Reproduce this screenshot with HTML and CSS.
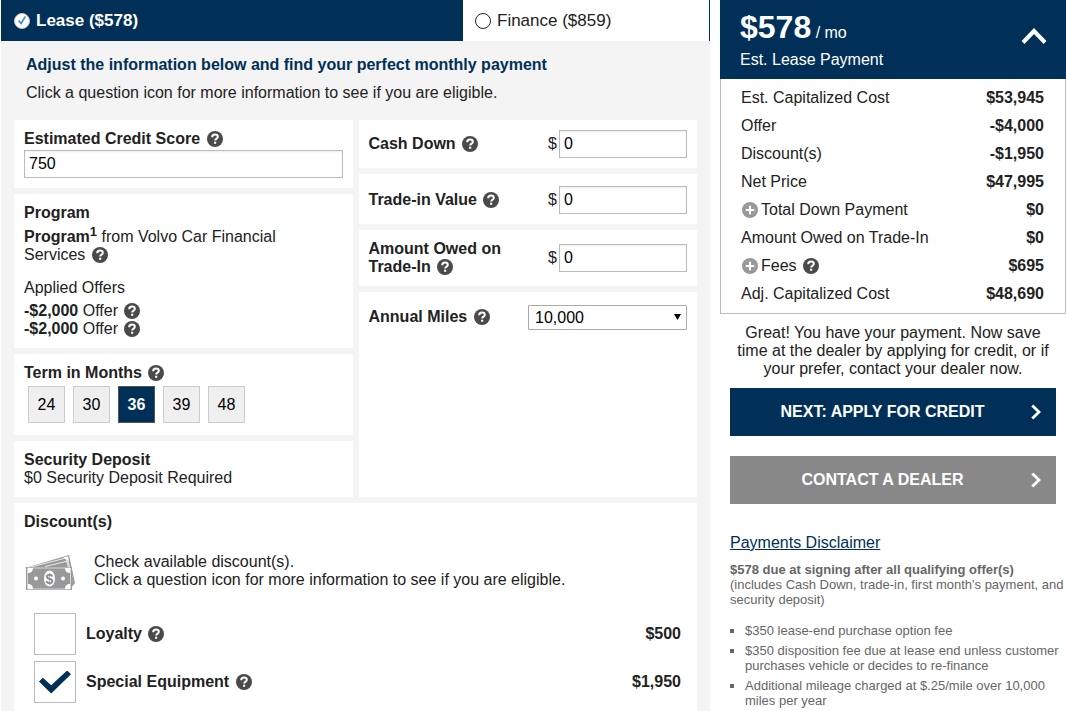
FILE: index.html
```
<!DOCTYPE html>
<html lang="en">
<head>
  <meta charset="UTF-8" />
  <title>Payment Calculator</title>
  <link rel="stylesheet" href="styles.css">
</head>
<body>
  <!-- shared icons -->
  <svg class="defs" aria-hidden="true">
    <symbol id="icon-help" viewBox="0 0 16 16">
      <circle cx="8" cy="8" r="8" fill="#4a4a4a"/>
      <path d="M5.2 6.2C5.2 4.4 6.4 3.6 8 3.6s2.8.9 2.8 2.3c0 1.7-2.6 1.8-2.6 3.6" fill="none" stroke="#fff" stroke-width="2"/>
      <rect x="7.1" y="10.7" width="2.1" height="2.1" fill="#fff"/>
    </symbol>
    <symbol id="icon-plus" viewBox="0 0 16 16">
      <circle cx="8" cy="8" r="8" fill="#999"/>
      <path d="M8 3.8v8.4M3.8 8h8.4" stroke="#fff" stroke-width="2"/>
    </symbol>
    <symbol id="icon-arrow" viewBox="0 0 10 16">
      <path d="M1.3 1.5L8 8l-6.7 6.5" fill="none" stroke="#fff" stroke-width="2.8"/>
    </symbol>
  </svg>

  <div class="page">
    <main class="calculator">
      <div class="tabs">
        <label class="tab active"><input type="radio" name="type" checked> Lease ($578)</label>
        <label class="tab"><input type="radio" name="type"> Finance ($859)</label>
      </div>

      <div class="intro">
        <h2>Adjust the information below and find your perfect monthly payment</h2>
        <p>Click a question icon for more information to see if you are eligible.</p>
      </div>

      <div class="cards">
        <div class="column">
          <section class="card">
            <label class="title" for="score">Estimated Credit Score</label>
            <button class="help" aria-label="Help"><svg><use href="#icon-help"/></svg></button>
            <input class="field score" id="score" type="text" value="750">
          </section>

          <section class="card">
            <h3>Program</h3>
            <p class="lender"><b>Program<sup>1</sup></b> from Volvo Car Financial Services <button class="help" aria-label="Help"><svg><use href="#icon-help"/></svg></button></p>
            <p>Applied Offers</p>
            <ul class="offers">
              <li><b>-$2,000</b> Offer <button class="help" aria-label="Help"><svg><use href="#icon-help"/></svg></button></li>
              <li><b>-$2,000</b> Offer <button class="help" aria-label="Help"><svg><use href="#icon-help"/></svg></button></li>
            </ul>
          </section>

          <section class="card term">
            <h3>Term in Months <button class="help" aria-label="Help"><svg><use href="#icon-help"/></svg></button></h3>
            <div class="months">
              <button>24</button>
              <button>30</button>
              <button class="selected">36</button>
              <button>39</button>
              <button>48</button>
            </div>
          </section>

          <section class="card">
            <h3>Security Deposit</h3>
            <p>$0 Security Deposit Required</p>
          </section>
        </div>

        <div class="column">
          <section class="card amount">
            <div class="name"><label for="cash">Cash Down</label> <button class="help" aria-label="Help"><svg><use href="#icon-help"/></svg></button></div>
            <span>$</span>
            <input class="field" id="cash" type="text" value="0">
          </section>

          <section class="card amount trade">
            <div class="name"><label for="trade">Trade-in Value</label> <button class="help" aria-label="Help"><svg><use href="#icon-help"/></svg></button></div>
            <span>$</span>
            <input class="field" id="trade" type="text" value="0">
          </section>

          <section class="card amount">
            <div class="name"><label for="owed">Amount Owed on Trade-In</label> <button class="help" aria-label="Help"><svg><use href="#icon-help"/></svg></button></div>
            <span>$</span>
            <input class="field" id="owed" type="text" value="0">
          </section>

          <section class="card amount miles">
            <div class="name"><label for="miles">Annual Miles</label> <button class="help" aria-label="Help"><svg><use href="#icon-help"/></svg></button></div>
            <div class="dropdown">
              <select id="miles">
                <option>10,000</option>
                <option>12,000</option>
                <option>15,000</option>
              </select>
            </div>
          </section>
        </div>
      </div>

      <section class="card discounts">
        <h3>Discount(s)</h3>
        <div class="discount-info">
          <svg class="money" viewBox="0 0 50 36" aria-hidden="true">
            <path d="M0 13L44 0l6 28-4 5V13z" fill="#999"/>
            <path d="M4 12.500L41 3l6 24M20 11.500L43 6l4 16" fill="none" stroke="#fff" stroke-width=".8"/>
            <path d="M38 2.500l5-1.300 1 5z" fill="#fff"/>
            <path d="M1 12h46v23H1z" fill="#999"/>
            <path d="M2.500 13h43v21h-43z" fill="none" stroke="#fff" stroke-width=".6"/>
            <path d="M3 13h5q0 5-5 5zM45 13h-5q0 5 5 5zM3 34h5q0-5-5-5zM45 34h-5q0-5 5-5z" fill="#fff"/>
            <circle cx="11" cy="23.500" r="2" fill="#fff"/>
            <circle cx="38" cy="23.500" r="2" fill="#fff"/>
            <ellipse cx="24.500" cy="23.500" rx="5.500" ry="8" fill="#fff"/>
            <text x="24.500" y="28.500" text-anchor="middle" font-size="14" font-weight="bold" fill="#888">$</text>
          </svg>
          <p>Check available discount(s).<br>Click a question icon for more information to see if you are eligible.</p>
        </div>

        <div class="discount">
          <input type="checkbox" id="loyalty">
          <div class="name"><label for="loyalty">Loyalty</label> <button class="help" aria-label="Help"><svg><use href="#icon-help"/></svg></button></div>
          <b>$500</b>
        </div>
        <div class="discount">
          <input type="checkbox" id="equipment" checked>
          <div class="name"><label for="equipment">Special Equipment</label> <button class="help" aria-label="Help"><svg><use href="#icon-help"/></svg></button></div>
          <b>$1,950</b>
        </div>
      </section>
    </main>

    <aside class="summary">
      <header class="total">
        <div>
          <div class="price"><strong>$578</strong> / mo</div>
          <div>Est. Lease Payment</div>
        </div>
        <button class="collapse" aria-label="Collapse">
          <svg viewBox="0 0 26 16"><path d="M2 14.500L13 3l11 11.500" fill="none" stroke="#fff" stroke-width="4"/></svg>
        </button>
      </header>

      <div class="breakdown">
        <table>
          <tr><td>Est. Capitalized Cost</td><td>$53,945</td></tr>
          <tr><td>Offer</td><td>-$4,000</td></tr>
          <tr><td>Discount(s)</td><td>-$1,950</td></tr>
          <tr><td>Net Price</td><td>$47,995</td></tr>
          <tr><td><button class="help plus" aria-label="Expand"><svg><use href="#icon-plus"/></svg></button>Total Down Payment</td><td>$0</td></tr>
          <tr><td>Amount Owed on Trade-In</td><td>$0</td></tr>
          <tr><td><button class="help plus" aria-label="Expand"><svg><use href="#icon-plus"/></svg></button>Fees <button class="help" aria-label="Help"><svg><use href="#icon-help"/></svg></button></td><td>$695</td></tr>
          <tr><td>Adj. Capitalized Cost</td><td>$48,690</td></tr>
        </table>
      </div>

      <p class="great">Great! You have your payment. Now save time at the dealer by applying for credit, or if your prefer, contact your dealer now.</p>

      <div class="actions">
        <button class="action next"><span>NEXT: APPLY FOR CREDIT</span><svg><use href="#icon-arrow"/></svg></button>
        <button class="action"><span>CONTACT A DEALER</span><svg><use href="#icon-arrow"/></svg></button>
      </div>

      <div class="disclaimer">
        <a href="#disclaimer">Payments Disclaimer</a>
        <p id="disclaimer"><b>$578 due at signing after all qualifying offer(s)</b><br>(includes Cash Down, trade-in, first month's payment, and security deposit)</p>
        <ul>
          <li>$350 lease-end purchase option fee</li>
          <li>$350 disposition fee due at lease end unless customer purchases vehicle or decides to re-finance</li>
          <li>Additional mileage charged at $.25/mile over 10,000 miles per year</li>
        </ul>
      </div>
    </aside>
  </div>
</body>
</html>
```
FILE: styles.css
```
* {
  box-sizing: border-box;
}

body {
  margin: 0;
  background: #fff;
  color: #222;
  font-family: Arial, "Liberation Sans", sans-serif;
  font-size: 16px;
  line-height: 18px;
}

h2, h3, p, ul {
  margin: 0;
  padding: 0;
  font-size: 16px;
}

ul {
  list-style: none;
}

button, input, select {
  margin: 0;
  font-family: inherit;
  font-size: 16px;
}

button {
  padding: 0;
  border: none;
  background: none;
  cursor: pointer;
}

.defs {
  display: none;
}

.page {
  display: flex;
  gap: 10px;
  min-height: 100vh;
  padding-left: 1px;
}

/* calculator */
.calculator {
  flex: 1;
  display: flex;
  flex-direction: column;
  background: #f4f4f4;
}

.tabs {
  display: flex;
  height: 41px;
  background: #fff;
  border-right: 1px solid #003057;
  font-size: 17px;
}

.tab {
  display: flex;
  align-items: center;
  gap: 6px;
  width: 246px;
  padding-left: 12px;
}

.tab.active {
  flex: 1;
  padding-left: 13px;
  background: #003057;
  color: #fff;
  font-weight: bold;
}

.tab input {
  appearance: none;
  display: grid;
  place-items: center;
  width: 16px;
  height: 16px;
  border: 1px solid #222;
  border-radius: 50%;
  background: #fff;
}

.tab input:checked {
  border-color: #ccc;
}

.tab input:checked::before {
  content: "";
  width: 8px;
  height: 9px;
  background: #4a90c8;
  clip-path: polygon(0 56%, 16% 44%, 36% 66%, 84% 0, 100% 10%, 40% 100%);
}

.intro {
  padding: 10px 25px 13px;
  line-height: 28px;
}

.intro h2 {
  color: #003057;
}

.cards {
  display: grid;
  grid-template-columns: 1fr 1fr;
  gap: 6px;
  padding: 0 13px;
}

.column {
  display: flex;
  flex-direction: column;
  gap: 6px;
}

.card {
  padding: 10px;
  background: #fff;
}

.title, .name {
  font-weight: bold;
}

.help {
  width: 16px;
  height: 16px;
  margin-left: 2px;
  vertical-align: -3px;
}

.help svg {
  display: block;
  width: 16px;
  height: 16px;
}

.field {
  width: 128px;
  height: 28px;
  padding: 0 4px;
  border: 1px solid #bbb;
  box-shadow: inset 0 1px 2px #eee;
}

.score {
  display: block;
  width: 100%;
  margin-top: 2px;
}

.lender {
  max-width: 270px;
  margin: 6px 0 15px;
}

sup {
  font-size: 13px;
  line-height: 0;
}

.offers {
  margin-top: 5px;
}

.term {
  padding-bottom: 12px;
}

.months {
  display: flex;
  gap: 8px;
  margin: 4px 4px 0;
}

.months button {
  width: 37px;
  height: 37px;
  border: 1px solid #ccc;
  background: #efefef;
}

.months .selected {
  border-color: #555;
  background: #003057;
  color: #fff;
  font-weight: bold;
}

.amount {
  display: flex;
  align-items: center;
  gap: 2px;
}

.amount .name {
  flex: 1;
  padding-right: 35px;
}

.trade {
  padding-top: 12px;
}

.miles {
  flex: 1;
  align-items: flex-start;
  padding-top: 13px;
}

.miles .name {
  padding: 3px 0;
}

.dropdown {
  position: relative;
  width: 159px;
}

.dropdown::after {
  content: "";
  position: absolute;
  top: 9px;
  right: 6px;
  width: 7px;
  height: 6px;
  background: #000;
  clip-path: polygon(0 0, 100% 0, 50% 100%);
  pointer-events: none;
}

.dropdown select {
  appearance: none;
  display: block;
  width: 100%;
  height: 25px;
  padding: 0 6px;
  border: 1px solid #aaa;
  border-radius: 1px;
  background: #fff;
  color: #000;
}

/* discounts */
.discounts {
  flex: 1;
  margin: 6px 13px 0;
  padding-bottom: 8px;
}

.discount-info {
  display: flex;
  align-items: flex-end;
  gap: 19px;
  margin: 22px 0;
  padding-left: 1px;
}

.discount-info p {
  padding-bottom: 2px;
}

.money {
  width: 50px;
  height: 36px;
}

.discount {
  display: flex;
  align-items: center;
  gap: 10px;
  margin-top: 6px;
  padding: 0 6px 0 10px;
}

.discount .name {
  flex: 1;
}

.discount input {
  appearance: none;
  display: grid;
  place-items: center;
  width: 42px;
  height: 42px;
  border: 1px solid #bbb;
}

.discount input:checked::before {
  content: "";
  width: 32px;
  height: 23px;
  background: #003057;
  clip-path: polygon(0 48%, 12% 32%, 38% 64%, 88% 0, 100% 16%, 38% 100%);
}

/* summary */
.summary {
  width: 346px;
}

.total {
  display: flex;
  justify-content: space-between;
  align-items: flex-start;
  padding: 11px 19px 10px 20px;
  background: #003057;
  color: #fff;
}

.price {
  margin-bottom: 1px;
  line-height: 34px;
}

.price strong {
  font-size: 32px;
  line-height: 32px;
}

.collapse {
  margin-top: 16px;
}

.collapse svg {
  display: block;
  width: 26px;
  height: 18px;
}

.breakdown {
  padding: 5px 21px 5px 20px;
  border: 1px solid #bbb;
  border-top: none;
}

.breakdown table {
  width: 100%;
  border-collapse: collapse;
}

.breakdown td {
  height: 28px;
  padding: 0;
}

.breakdown td:last-child {
  font-weight: bold;
  text-align: right;
}

.plus {
  margin: 0 3px 0 1px;
}

.great {
  padding: 10px 12px 10px;
  text-align: center;
}

.actions {
  display: grid;
  gap: 20px;
  padding: 0 10px;
}

.action {
  display: flex;
  align-items: center;
  height: 48px;
  padding: 0 15px 0 4px;
  background: #888;
  color: #fff;
  font-weight: bold;
}

.action span {
  flex: 1;
}

.action svg {
  width: 10px;
  height: 16px;
}

.next {
  background: #003057;
}

.disclaimer {
  padding: 30px 0 0 10px;
  color: #666;
  font-size: 13px;
  line-height: 15px;
}

.disclaimer a {
  color: #003057;
  font-size: 16px;
  line-height: 18px;
}

.disclaimer p {
  margin: 10px 0 16px;
  font-size: 13px;
}

.disclaimer ul {
  padding-left: 15px;
  font-size: 13px;
  list-style: square;
}

.disclaimer li {
  margin-bottom: 5px;
}

.disclaimer li:last-child {
  margin-bottom: 0;
}
```
